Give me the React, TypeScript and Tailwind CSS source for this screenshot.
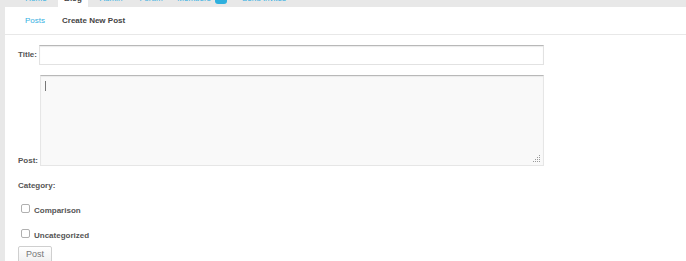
import React from 'react'

const tabs = [
    { name: 'Home', w: 'w-[32px]' },
    { name: 'Blog', w: 'w-[30px]', active: true },
    { name: 'Admin', w: 'w-[34px]' },
    { name: 'Forum', w: 'w-[34px]' },
    { name: 'Members', w: 'w-[56px]', badge: '2' },
    { name: 'Send Invites', w: 'w-[56px]' },
]

const categories = ['Comparison', 'Uncategorized']

export default function App() {
    return (
        <div className="w-[686px] h-[261px] overflow-hidden bg-[#e8e8e8] font-['Liberation_Sans',Arial,sans-serif]">
            {/* top tabs, mostly scrolled out of view */}
            <div className="h-[7px] flex items-start pl-[20px] gap-[6px] text-[8px] leading-[8px] text-[#35b0e2]">
                {tabs.map((tab) => (
                    <div key={tab.name} className={`h-[7px] flex items-start justify-center gap-[4px] ${tab.w} ${tab.active ? 'bg-white' : ''}`}>
                        <span className={`-mt-[5px] whitespace-nowrap ${tab.active ? 'font-bold text-[#444]' : ''}`}>{tab.name}</span>
                        {tab.badge && <span className="-mt-[8px] h-[12px] w-[12px] rounded-[3px] bg-[#2eb0de] text-white text-center">{tab.badge}</span>}
                    </div>
                ))}
            </div>

            <div className="ml-[5px] bg-white h-[254px]">
                <div className="h-[28px] flex items-center pl-[20px] pt-[1px] gap-[17px] border-b border-[#e8e8e8] text-[8px]">
                    <span className="text-[#35b0e2]">Posts</span>
                    <span className="font-bold text-[#444]">Create New Post</span>
                </div>

                <form className="pl-[13px] pt-[10px] text-[8px] text-[#555] font-bold">
                    <div className="flex items-center gap-[2px]">
                        <label>Title:</label>
                        <input className="w-[505px] h-[20px] bg-white border border-[#e2e2e2] border-t-[#b8b8b8] shadow-[inset_0_1px_1px_rgba(0,0,0,0.08)] outline-none" />
                    </div>

                    <div className="flex items-end gap-[2px] mt-[10px]">
                        <label className="leading-[8px] mb-[1px]">Post:</label>
                        <div className="relative">
                            <textarea className="block w-[504px] h-[91px] bg-[#f9f9f9] border border-[#e6e6e6] border-t-[#b8b8b8] shadow-[inset_0_1px_1px_rgba(0,0,0,0.06)] outline-none resize-none" />
                            <span className="absolute left-[5px] top-[6px] w-px h-[10px] bg-[#777]" />
                            <svg className="absolute right-[3px] bottom-[3px]" width="9" height="8" viewBox="0 0 9 8" fill="#9a9a9a">
                                <rect x="7" y="0" width="1" height="1" />
                                <rect x="5" y="2" width="1" height="1" />
                                <rect x="7" y="2" width="1" height="1" />
                                <rect x="3" y="4" width="1" height="1" />
                                <rect x="5" y="4" width="1" height="1" />
                                <rect x="7" y="4" width="1" height="1" />
                                <rect x="1" y="6" width="1" height="1" />
                                <rect x="3" y="6" width="1" height="1" />
                                <rect x="5" y="6" width="1" height="1" />
                                <rect x="7" y="6" width="1" height="1" />
                            </svg>
                        </div>
                    </div>

                    <div className="mt-[16px] leading-[8px]">Category:</div>

                    <div className="flex flex-col gap-[16px] mt-[14px] pl-[3px]">
                        {categories.map((c) => (
                            <label key={c} className="flex items-center gap-[4px] h-[9px]">
                                <input type="checkbox" className="appearance-none w-[9px] h-[9px] rounded-[2px] border border-[#b0b0b0] bg-white" />
                                <span className="mt-[4px]">{c}</span>
                            </label>
                        ))}
                    </div>

                    <button type="button" className="mt-[8px] w-[34px] h-[18px] border border-[#cfcfcf] rounded-[2px] bg-gradient-to-b from-white to-[#efefef] text-[9px] font-normal text-[#777]">
                        Post
                    </button>
                </form>
            </div>
        </div>
    )
}
